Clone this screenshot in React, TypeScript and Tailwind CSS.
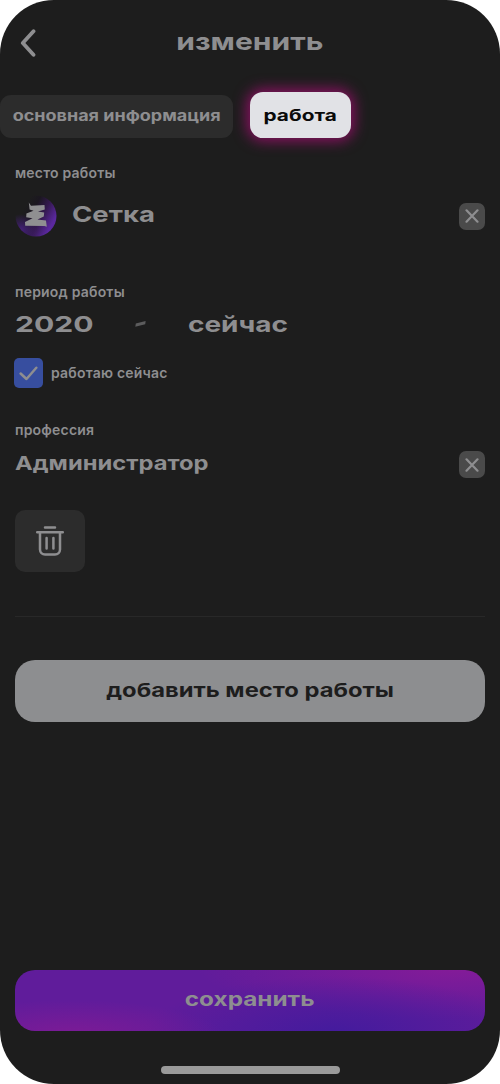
import { clsx } from "clsx";
import type { ReactNode } from "react";

// Extended display lettering: Inter stretched horizontally
function Wide({ children, className }: { children: ReactNode; className?: string }) {
    return (
        <span className={clsx("inline-block whitespace-nowrap font-bold leading-none", className)}>
            {children}
        </span>
    );
}

function Label({ children }: { children: ReactNode }) {
    return <div className="h-5 text-[14px] font-semibold leading-5 tracking-[0.2px]">{children}</div>;
}

function ClearButton() {
    return (
        <button type="button" aria-label="очистить" className="flex h-[27px] w-[26px] shrink-0 items-center justify-center rounded-[7px] bg-[#4a4a4a]">
            <svg width="14" height="14" viewBox="0 0 14 14" fill="none" stroke="#8e8e90" strokeWidth="2.2" strokeLinecap="round">
                <path d="M1.5 1.3 12.5 12.7M12.5 1.3 1.5 12.7" />
            </svg>
        </button>
    );
}

function CompanyLogo() {
    return (
        <svg className="shrink-0" width="42" height="42" viewBox="0 0 42 42">
            <defs>
                <linearGradient id="logo" x1="8" y1="8" x2="39" y2="25" gradientUnits="userSpaceOnUse">
                    <stop offset="0.1" stopColor="#1d1d1d" />
                    <stop offset="0.35" stopColor="#1b1720" />
                    <stop offset="0.65" stopColor="#34194f" />
                    <stop offset="1" stopColor="#5a289e" />
                </linearGradient>
                <radialGradient id="logoGlow" cx="6" cy="35" r="16" gradientUnits="userSpaceOnUse">
                    <stop offset="0" stopColor="#45207a" />
                    <stop offset="1" stopColor="#45207a" stopOpacity="0" />
                </radialGradient>
            </defs>
            <circle cx="21" cy="21" r="20.5" fill="url(#logo)" />
            <circle cx="21" cy="21" r="20.5" fill="url(#logoGlow)" />
            <path
                d="M13.8 7.6 16 10.8 29.5 10 29.8 14.6 23 16.6 29.2 17.6 28.8 21.6 22.5 24.6 31 25.4 31.8 31.8 29.5 31 10.2 30.8 10 27 17.5 23.2 11.2 22.2 11.4 18.4 18.5 15.8 14.6 14.6Z"
                fill="#8f8f91"
            />
        </svg>
    );
}

function TrashIcon() {
    return (
        <svg width="30" height="32" viewBox="0 0 30 32" fill="none" stroke="#8e8e90" strokeWidth="2.5" strokeLinecap="round" strokeLinejoin="round">
            <path d="M10 2.4h10M2.2 7.2h25.6M5 7.2v17.3a5 5 0 0 0 5 5h10a5 5 0 0 0 5-5V7.2M11.6 13v10.5M18.4 13v10.5" />
        </svg>
    );
}

export default function App() {
    return (
        <div className="h-[1084px] w-[500px] bg-white">
            <main className="flex h-full flex-col overflow-hidden rounded-[54px] bg-[#1d1d1d] font-['Inter',sans-serif] text-[#8e8e90]">
                <header className="grid h-[84px] shrink-0 grid-cols-[56px_1fr_56px] items-center">
                    <button type="button" aria-label="назад" className="pl-5 pt-0.5">
                        <svg width="17" height="28" viewBox="0 0 17 28" fill="none" stroke="#8e8e90" strokeWidth="3.8" strokeLinecap="round" strokeLinejoin="round">
                            <path d="M13.5 2.2 2.8 14 13.5 25.8" />
                        </svg>
                    </button>
                    <h1 className="text-center leading-none">
                        <Wide className="scale-x-[1.25] text-[24px]">изменить</Wide>
                    </h1>
                </header>

                <nav className="flex h-[62px] shrink-0 items-center gap-[17px]">
                    <button type="button" className="mt-0.5 flex h-[43px] w-[233px] items-center justify-center rounded-[11px] bg-[#2c2c2c]">
                        <Wide className="-mt-0.5 scale-x-[1.2] text-[15px]">основная информация</Wide>
                    </button>
                    <button type="button" className="flex h-[46px] w-[101px] items-center justify-center rounded-[13px] bg-[#e1e2e6] text-[#0a0a0a] shadow-[0_0_14px_3px_#8c1163]">
                        <Wide className="-mt-px scale-x-[1.3] text-[16px]">работа</Wide>
                    </button>
                </nav>

                <section className="flex flex-col px-[15px] pt-[17px]">
                    <Label>место работы</Label>
                    <div className="mt-3 flex h-[42px] items-center">
                        <CompanyLogo />
                        <div className="flex-1 pb-0.5 pl-[15px]">
                            <Wide className="origin-left scale-x-[1.25] text-[22px]">Сетка</Wide>
                        </div>
                        <ClearButton />
                    </div>
                </section>

                <section className="flex flex-col px-[15px] pt-[45px]">
                    <Label>период работы</Label>
                    <div className="mt-2.5 flex h-6 items-center leading-none">
                        <div className="w-[120px]">
                            <Wide className="origin-left scale-x-[1.37] text-[22px]">2020</Wide>
                        </div>
                        <div className="w-[53px]">
                            <svg width="11" height="6" viewBox="0 0 11 6" fill="#5c5c5d">
                                <path d="M.8 2.5 10.6 0 10.2 3.2.3 5.7Z" />
                            </svg>
                        </div>
                        <Wide className="origin-left scale-x-[1.27] text-[22px]">сейчас</Wide>
                    </div>
                    <label className="-ml-px mt-[22px] flex h-[30px] items-center gap-2 text-[14px] font-semibold tracking-[0.2px]">
                        <span className="flex h-[30px] w-[29px] items-center justify-center rounded-[5px] bg-[#374e9f]">
                            <svg width="19" height="15" viewBox="0 0 19 15" fill="none" stroke="#8e8e90" strokeWidth="2.5" strokeLinecap="round" strokeLinejoin="round">
                                <path d="M1.6 7.5 7.5 13 17.3 1.8" />
                            </svg>
                        </span>
                        <span className="-mt-px">работаю сейчас</span>
                    </label>
                </section>

                <section className="flex flex-col px-[15px] pt-8">
                    <Label>профессия</Label>
                    <div className="mt-[11px] flex h-[27px] items-center justify-between">
                        <Wide className="-mt-0.5 origin-left scale-x-[1.25] text-[19px]">Администратор</Wide>
                        <ClearButton />
                    </div>
                    <button type="button" aria-label="удалить" className="mt-8 flex h-[62px] w-[70px] items-center justify-center rounded-[10px] bg-[#2c2c2c]">
                        <TrashIcon />
                    </button>
                    <hr className="mt-11 border-[#282828]" />
                    <button type="button" className="mt-[43px] flex h-[62px] items-center justify-center rounded-[20px] bg-[#8d8e90] text-[#1d1d1d]">
                        <Wide className="-mt-0.5 scale-x-[1.25] text-[19px]">добавить место работы</Wide>
                    </button>
                </section>

                <footer className="mt-auto flex flex-col items-center px-[15px] pb-[10px]">
                    <button
                        type="button"
                        className="flex h-[61px] w-full items-center justify-center rounded-[20px] bg-[#601c9b] bg-[radial-gradient(ellipse_150px_34px_at_12%_105%,#7c1b96,transparent),radial-gradient(ellipse_190px_58px_at_68%_105%,#431b9d,transparent),radial-gradient(ellipse_260px_52px_at_94%_-5%,#851b98,transparent)]"
                    >
                        <Wide className="-mt-0.5 scale-x-[1.28] text-[19px]">сохранить</Wide>
                    </button>
                    <div className="mt-[35px] h-2 w-[179px] rounded-full bg-[#9a9a9a]" />
                </footer>
            </main>
        </div>
    );
}
